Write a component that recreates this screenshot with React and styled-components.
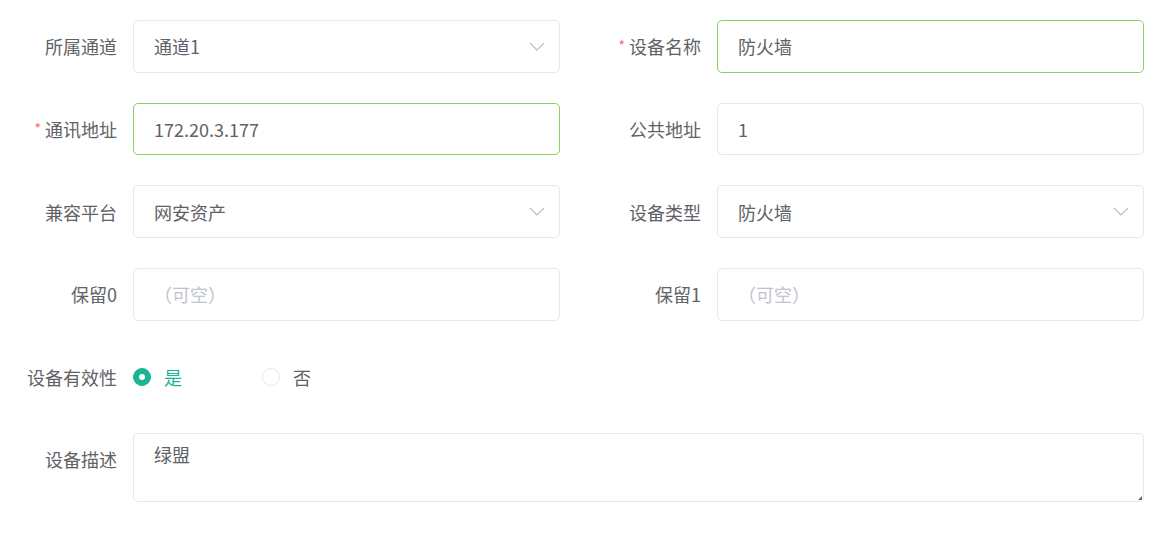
import React from "react";
import styled, { createGlobalStyle } from "styled-components";

const Global = createGlobalStyle`
  html, body { margin: 0; padding: 0; background: #fff; }
  body { font-family: "Noto Sans CJK SC", "Microsoft YaHei", sans-serif; }
`;

const Form = styled.form`
  width: 1144px;
  padding-top: 20px;
  display: flex;
  flex-direction: column;
  gap: 30px;
`;

const Row = styled.div`
  display: grid;
  grid-template-columns: ${(p) => (p.$full ? "1fr" : "560px 560px")};
  column-gap: 24px;
`;

const Item = styled.div`
  display: flex;
  align-items: ${(p) => (p.$top ? "flex-start" : "center")};
  min-height: ${(p) => (p.$short ? "52px" : "52.7px")};
`;

const Label = styled.label`
  flex: 0 0 117px;
  margin-right: 16px;
  text-align: right;
  font-size: 18px;
  color: #606266;
  white-space: nowrap;
  line-height: 1;
  padding-top: ${(p) => (p.$top ? "17px" : "0")};
`;

const Star = styled.span`
  color: #f56c6c;
  font-size: 14px;
  margin-right: 4px;
  position: relative;
  top: -3px;
`;

const Box = styled.div`
  flex: 1;
  height: 52.7px;
  box-sizing: border-box;
  border: 1px solid ${(p) => (p.$ok ? "#86d262" : "#e4e7ed")};
  border-radius: 5px;
  display: flex;
  align-items: center;
  padding: 0 14px 0 20px;
  font-size: 18px;
  color: ${(p) => (p.$placeholder ? "#c0c4cc" : "#606266")};
`;

const Value = styled.span`
  flex: 1;
`;

const Area = styled.div`
  flex: 1;
  height: 69px;
  box-sizing: border-box;
  border: 1px solid #e4e7ed;
  border-radius: 5px;
  padding: 7px 20px;
  font-size: 18px;
  color: #606266;
  position: relative;
`;

const Grip = styled.span`
  position: absolute;
  right: 1px;
  bottom: 1px;
  width: 0;
  height: 0;
  border-left: 4px solid transparent;
  border-bottom: 4px solid #666;
`;

const Radios = styled.div`
  display: flex;
  align-items: center;
`;

const Radio = styled.div`
  display: flex;
  align-items: center;
  width: 129px;
  font-size: 18px;
  color: ${(p) => (p.$on ? "#1ab394" : "#606266")};
`;

const Dot = styled.span`
  width: 18px;
  height: 18px;
  box-sizing: border-box;
  border-radius: 50%;
  margin-right: 13px;
  border: 1px solid ${(p) => (p.$on ? "#1ab394" : "#e4e7ed")};
  background: ${(p) => (p.$on ? "#1ab394" : "#fff")};
  display: flex;
  align-items: center;
  justify-content: center;
  &::after {
    content: "";
    width: 6px;
    height: 6px;
    border-radius: 50%;
    background: ${(p) => (p.$on ? "#fff" : "transparent")};
  }
`;

const Chevron = () => (
  <svg width="16" height="9" viewBox="0 0 16 9" fill="none">
    <path d="M1 1l7 7 7-7" stroke="#c0c4cc" strokeWidth="1.4" />
  </svg>
);

const Field = ({ label, required, value, placeholder, select, ok }) => (
  <Item>
    <Label>
      {required && <Star>*</Star>}
      {label}
    </Label>
    <Box $ok={ok} $placeholder={!!placeholder}>
      <Value>{value || placeholder}</Value>
      {select && <Chevron />}
    </Box>
  </Item>
);

export default function App() {
  return (
    <>
      <Global />
      <Form>
        <Row>
          <Field label="所属通道" value="通道1" select />
          <Field label="设备名称" required value="防火墙" ok />
        </Row>
        <Row>
          <Field label="通讯地址" required value="172.20.3.177" ok />
          <Field label="公共地址" value="1" />
        </Row>
        <Row>
          <Field label="兼容平台" value="网安资产" select />
          <Field label="设备类型" value="防火墙" select />
        </Row>
        <Row>
          <Field label="保留0" placeholder="（可空）" />
          <Field label="保留1" placeholder="（可空）" />
        </Row>
        <Row $full>
          <Item $short>
            <Label>设备有效性</Label>
            <Radios>
              <Radio $on>
                <Dot $on />是
              </Radio>
              <Radio>
                <Dot />否
              </Radio>
            </Radios>
          </Item>
        </Row>
        <Row $full>
          <Item $top>
            <Label $top>设备描述</Label>
            <Area>
              绿盟
              <Grip />
            </Area>
          </Item>
        </Row>
      </Form>
    </>
  );
}
